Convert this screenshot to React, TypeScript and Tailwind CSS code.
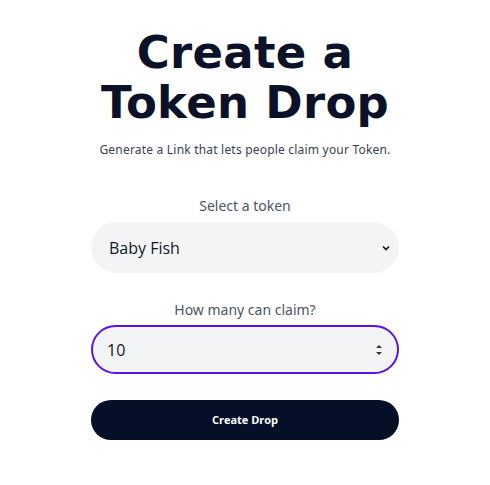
import { useState } from "react";

export default function App() {
  const [count, setCount] = useState("10");

  return (
    <div className="w-[490px] h-[485px] bg-white flex flex-col items-center">
      <h1 className="mt-[28px] text-center text-[45px] leading-[50px] font-extrabold tracking-[0.3px] text-[#0b1126] font-['DejaVu_Sans',sans-serif]">
        Create a
        <br />
        Token Drop
      </h1>
      <p className="mt-[13px] text-[12px] text-[#374151] tracking-[0.2px] font-['Noto_Sans',sans-serif]">
        Generate a Link that lets people claim your Token.
      </p>

      <div className="mt-[36px] w-[308px] flex flex-col items-center">
        <label className="text-[14px] text-[#4b5563] font-['Noto_Sans',sans-serif]">
          Select a token
        </label>
        <div className="mt-[6px] w-full h-[51px] rounded-full bg-[#f3f4f6] flex items-center justify-between pl-[18px] pr-[8px]">
          <span className="text-[16px] text-[#111827] font-['Open_Sans',sans-serif]">
            Baby Fish
          </span>
          <svg width="10" height="10" viewBox="0 0 10 10">
            <path d="M2 3.5 L5 6.5 L8 3.5" stroke="#111" strokeWidth="1.6" fill="none" />
          </svg>
        </div>

        <label className="mt-[26px] text-[14px] text-[#4b5563] font-['Noto_Sans',sans-serif]">
          How many can claim?
        </label>
        <div className="mt-[5px] w-full h-[49px] rounded-full bg-[#f3f4f6] border-2 border-[#5b13e6] flex items-center justify-between pl-[14px] pr-[14px]">
          <input
            autoFocus
            value={count}
            onChange={(e) => setCount(e.target.value)}
            className="bg-transparent outline-none text-[16px] text-[#111827] w-[200px] caret-black font-['Open_Sans',sans-serif]"
          />
          <svg width="8" height="14" viewBox="0 0 8 14">
            <path d="M1 5 L4 2 L7 5 Z" fill="#333" />
            <path d="M1 9 L4 12 L7 9 Z" fill="#333" />
          </svg>
        </div>

        <button className="mt-[26px] w-full h-[40px] rounded-full bg-[#060f28] text-white text-[11px] font-bold font-['Open_Sans',sans-serif]">
          Create Drop
        </button>
      </div>
    </div>
  );
}
